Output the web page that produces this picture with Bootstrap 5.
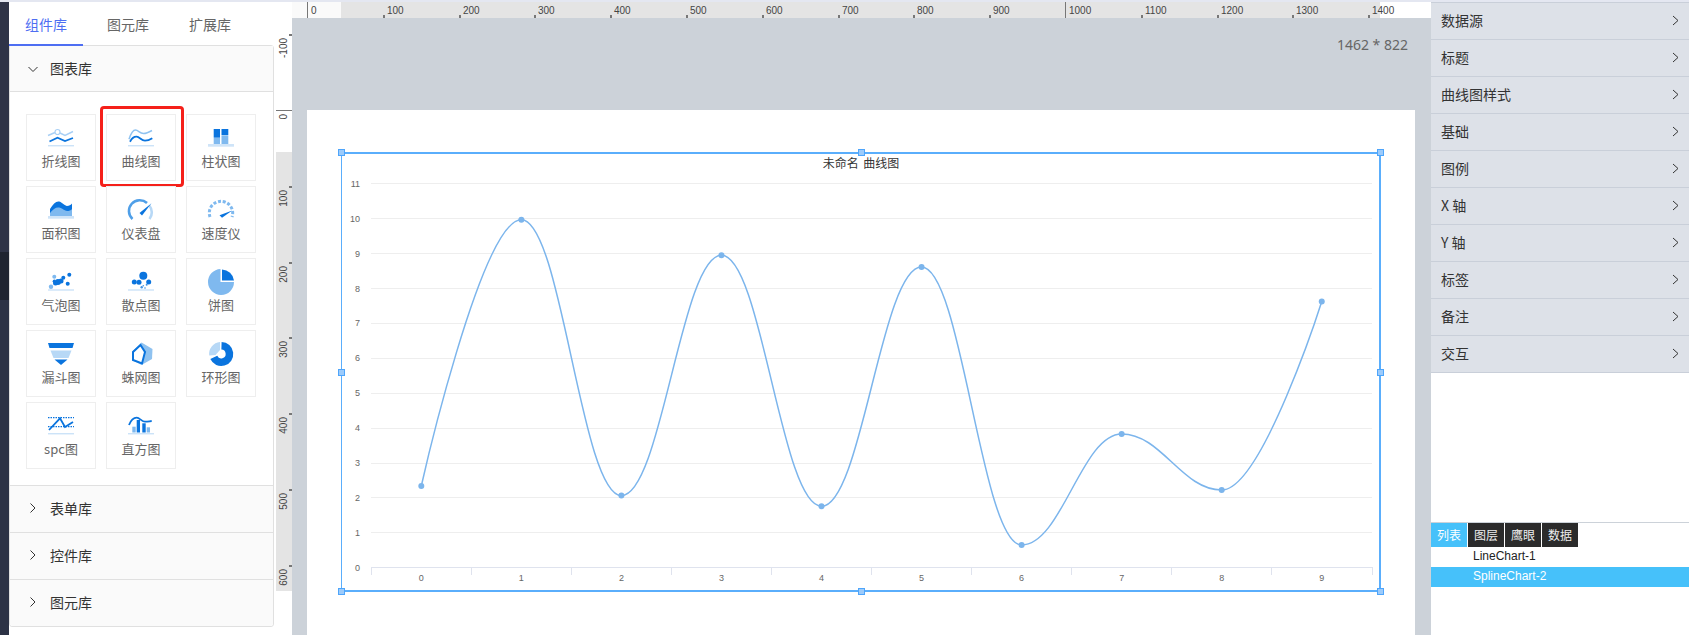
<!DOCTYPE html>
<html lang="zh">
<head>
    <meta charset="UTF-8">
    <meta name="viewport" content="width=device-width, initial-scale=1.0">
    <title>曲线图</title>
    <link href="https://cdn.jsdelivr.net/npm/bootstrap@5.3.0/dist/css/bootstrap.min.css" rel="stylesheet">
    <style>
        html, body { height: 100%; overflow: hidden; }
        body { font-family: "Liberation Sans", "Noto Sans CJK SC", sans-serif; background: #e4e7f1; padding-top: 2px; color: #333; }
        .cjk { font-family: "Noto Sans CJK SC", sans-serif; }
        .app-shell { height: 633px; }

        .side-strip { width: 9px; background: linear-gradient(#2f3447 0, #2f3447 250px, #1f2430 250px, #1f2430 298px, #2c3245 298px); }
        .side-panel { width: 267px; background: #fff; padding-right: 2px; }
        .lib-tabs { height: 44px; gap: 8px; }
        .lib-tab { width: 74px; height: 44px; line-height: 44px; text-align: center; font-size: 14px; color: #666; }
        .lib-tab.on { color: #4e6ef2; border-bottom: 2px solid #4e6ef2; position: relative; }
        .lib-card { border: 1px solid #e0e0e0; border-radius: 0 3px 3px 3px; margin-top: -1px; }
        .lib-head { height: 47px; background: #fafafa; font-size: 14px; color: #333; padding: 0 0 2px 17px; border-top: 1px solid #e0e0e0; }
        .lib-head:first-child { border-top: 0; border-bottom: 1px solid #e0e0e0; height: 46px; padding-bottom: 0; }
        .lib-head:last-child { border-radius: 0 0 3px 3px; }
        .lib-head svg { width: 12px; height: 12px; margin-right: 11px; }
        .lib-grid { display: grid; grid-template-columns: repeat(3, 70px); grid-auto-rows: 67px; column-gap: 10px; row-gap: 5px; padding: 22px 0 16px 16px; }
        .lib-cell { position: relative; border: 1px solid #eee; font-size: 13px; color: #666; padding-top: 12px; line-height: 20px; }
        .lib-cell svg { width: 26px; height: 22px; margin-bottom: 2px; overflow: visible; }
        .lib-pick { position: absolute; left: -7px; right: -9px; top: -9px; bottom: -7px; border: 3px solid #f5201a; border-radius: 4px; }

        .stage { width: 1155px; display: grid; grid-template-columns: 16px 1fr; grid-template-rows: 16px 1fr; }
        .ruler-corner { background: #fff; }
        .ruler-top, .ruler-left { display: block; background: #fff; }
        .ruler-text { font: 10px "Liberation Sans", sans-serif; fill: #444; }
        .canvas-area { background: #ccd2d9; padding: 0 16px 0 15px; overflow: hidden; }
        .canvas-size { height: 92px; padding: 17px 7px 0 0; font: 14px "Noto Sans", sans-serif; color: #666; text-align: right; }
        .art-board { background: #fff; height: 525px; padding: 42px 35px 0 34px; }
        .chart-box { position: relative; width: 1040px; height: 440px; border: 2px solid #5aaefc; border-left-width: 1px; }
        .chart-box svg { display: block; position: absolute; left: -1px; top: -2px; }
        .grab { position: absolute; width: 7px; height: 7px; background: #9ccbfb; border: 1px solid #4ea5fb; }
        .chart-title { font: 12px "Noto Sans CJK SC", sans-serif; fill: #333; word-spacing: 2px; }
        .chart-label { font: 9px "Liberation Sans", sans-serif; fill: #666; }

        .prop-panel { width: 258px; background: #fff; }
        .prop-list { border-top: 1px solid #c9cfd9; }
        .prop-row { height: 37px; background: #dde1e8; border-bottom: 1px solid #c9cfd9; font-size: 14px; padding: 0 10px 2px; }
        .prop-row svg { width: 7px; height: 11px; }
        .layer-panel { border-top: 1px solid #ccd2d9; margin-top: 149px; font-size: 12px; }
        .layer-tab { width: 36px; height: 24px; line-height: 24px; text-align: center; background: #2b2b2b; color: #eee; margin-right: 1px; }
        .layer-tab.on { background: #46c1fa; color: #fff; }
        .layer-list { font-family: "Liberation Sans", sans-serif; }
        .layer-row { height: 20px; line-height: 19px; padding-left: 42px; color: #222; }
        .layer-row.on { background: #46c1fa; color: #fff; }
    </style>
</head>
<body>
<div class="app-shell d-flex">
    <div class="side-strip"></div>

    <div class="side-panel cjk">
        <div class="lib-tabs d-flex">
            <div class="lib-tab on">组件库</div>
            <div class="lib-tab">图元库</div>
            <div class="lib-tab">扩展库</div>
        </div>
        <div class="lib-card">
            <div class="lib-head d-flex align-items-center">
                <svg viewBox="0 0 12 12"><path d="M1.500 4l4.500 4.500L10.500 4" fill="none" stroke="#333" stroke-width="1"/></svg>图表库
            </div>
            <div class="lib-grid">
                <div class="lib-cell d-flex flex-column align-items-center">
                    <svg viewBox="0 0 26 22"><path d="M0 8.500l7-3M12 6l5 2.500 8-4" fill="none" stroke="#a9d0f5" stroke-width="1.500"/><circle cx="9.500" cy="5" r="2.500" fill="none" stroke="#a9d0f5" stroke-width="1.200"/><path d="M1.500 14.500l8-3.800 7.500 3.300 8-3" fill="none" stroke="#0a74de" stroke-width="1.800"/><rect y="18.300" width="26" height="1" fill="#b7d8f6"/></svg>
                    折线图
                </div>
                <div class="lib-cell d-flex flex-column align-items-center">
                    <svg viewBox="0 0 26 22"><path d="M1 12.300C3 6 5 3 7.500 3c3 0 4 3.500 8 3.500 3 0 5-1 8.500-3" fill="none" stroke="#8fc2f0" stroke-width="1.500"/><path d="M2 14.700C4 11 6 9.500 8.700 9.700c3 .2 4.500 4 8.300 4 3 0 5-1 7.300-2.400" fill="none" stroke="#0a74de" stroke-width="1.800"/><rect y="18.300" width="26" height="1" fill="#b7d8f6"/></svg>
                    曲线图
                    <span class="lib-pick"></span>
                </div>
                <div class="lib-cell d-flex flex-column align-items-center">
                    <svg viewBox="0 0 26 22"><rect x="5.700" y="2" width="6.300" height="8.700" fill="#0a74de"/><rect x="5.700" y="11" width="6.300" height="6" fill="#7fb9ef"/><rect x="13.500" y="2" width="6.800" height="6" fill="#0a74de"/><rect x="13.500" y="8.300" width="6.800" height="8.700" fill="#7fb9ef"/><rect y="17" width="26" height="2.700" fill="#cfe4f8"/></svg>
                    柱状图
                </div>
                <div class="lib-cell d-flex flex-column align-items-center">
                    <svg viewBox="0 0 26 22"><path d="M2 10C5 5 8 2 11 2.500S17 7 19 7s4-1 5-2.500V17H2z" fill="#0a74de"/><path d="M2 14c3-4 6-6 9-5.500s6 3.500 8 3.500 4-.5 5-2V17H2z" fill="#7fb9ef"/><rect y="17" width="26" height="2.700" fill="#cfe4f8"/></svg>
                    面积图
                </div>
                <div class="lib-cell d-flex flex-column align-items-center">
                    <svg viewBox="0 0 26 22"><path d="M4.500 20A10.700 10.700 0 0 1 19 4" fill="none" stroke="#4f9fe8" stroke-width="2.600"/><path d="M21.300 6.500A10.700 10.700 0 0 1 21.500 20" fill="none" stroke="#b7d8f6" stroke-width="2.600"/><path d="M23.500 4.300L14 16.500l-2.500-2.500z" fill="#0a74de"/></svg>
                    仪表盘
                </div>
                <div class="lib-cell d-flex flex-column align-items-center">
                    <svg viewBox="0 0 26 22"><path d="M2 18A11.700 11.700 0 1 1 24 18" fill="none" stroke="#7fb9ef" stroke-width="3" stroke-dasharray="3 1.800"/><path d="M24.300 11.500L14 18.700l-2.500-2.500z" fill="#0a74de"/></svg>
                    速度仪
                </div>
                <div class="lib-cell d-flex flex-column align-items-center">
                    <svg viewBox="0 0 26 22"><g fill="#0a74de"><circle cx="10" cy="11" r="3"/><circle cx="7.500" cy="12" r="2.500"/><circle cx="13" cy="10" r="2.500"/><circle cx="15.300" cy="6.700" r="2"/><circle cx="21.300" cy="3.700" r="2"/><circle cx="19.700" cy="12.700" r="2"/><circle cx="6.300" cy="10.200" r="1.600"/></g><g fill="#7fb9ef"><circle cx="6.300" cy="5.700" r="2"/><circle cx="3" cy="15.700" r="2.200"/></g><rect y="18.500" width="26" height="1" fill="#b7d8f6"/></svg>
                    气泡图
                </div>
                <div class="lib-cell d-flex flex-column align-items-center">
                    <svg viewBox="0 0 26 22"><g fill="#0a74de"><circle cx="15.300" cy="4.700" r="4"/><circle cx="6.300" cy="11" r="2.500"/><circle cx="11" cy="11.300" r="2.500"/><circle cx="20.700" cy="11" r="2.500"/></g><g fill="#3f92e4"><circle cx="18.700" cy="13.800" r="1"/><circle cx="13.700" cy="16.300" r="1.200"/><circle cx="17" cy="17" r=".8"/><circle cx="15.300" cy="14.700" r=".8"/></g><rect y="18.500" width="26" height="1" fill="#b7d8f6"/></svg>
                    散点图
                </div>
                <div class="lib-cell d-flex flex-column align-items-center">
                    <svg viewBox="0 0 26 22"><path d="M12.500 -2A13 13 0 1 0 26 11H12.500z" fill="#7fb9ef"/><path d="M14 -1.500V9.500H26A12.500 12.500 0 0 0 14 -1.500z" fill="#0a74de"/></svg>
                    饼图
                </div>
                <div class="lib-cell d-flex flex-column align-items-center">
                    <svg viewBox="0 0 26 22"><path d="M0 0h26l-1.500 5h-23z" fill="#0a74de"/><path d="M2.500 7.500h21L20.500 15h-15z" fill="#b7d8f6"/><path d="M6.500 16.500h13L13 22z" fill="#0a74de"/></svg>
                    漏斗图
                </div>
                <div class="lib-cell d-flex flex-column align-items-center">
                    <svg viewBox="0 0 26 22"><path d="M13.500 -.5L24.500 6 24 16 13.500 22 6 18 5 8z" fill="#8fc2f0"/><path d="M12.500 2L5 9v8l9 3.500L17 9z" fill="#fff" stroke="#0a74de" stroke-width="2"/></svg>
                    蛛网图
                </div>
                <div class="lib-cell d-flex flex-column align-items-center">
                    <svg viewBox="0 0 26 22"><path d="M13.500 2.800A8.200 8.200 0 1 1 5.800 14.400" fill="none" stroke="#0a74de" stroke-width="7.600"/><path d="M12 -1A12 12 0 0 0 1.200 12.500L7.500 12 12 7z" fill="#b7d8f6"/></svg>
                    环形图
                </div>
                <div class="lib-cell d-flex flex-column align-items-center">
                    <svg viewBox="0 0 26 22"><path d="M0 2.700h26M0 11.700h26" stroke="#0a74de" stroke-width="1.200" stroke-dasharray="1.500 1"/><path d="M1 15L12 3.300 17 12l8-5" fill="none" stroke="#0a74de" stroke-width="1.800"/><rect y="18.300" width="26" height="1" fill="#b7d8f6"/></svg>
                    spc图
                </div>
                <div class="lib-cell d-flex flex-column align-items-center">
                    <svg viewBox="0 0 26 22"><rect x="4.300" y="11.700" width="3.400" height="5.800" fill="#7fb9ef"/><rect x="8.700" y="5" width="3.300" height="12.500" fill="#0a74de"/><rect x="14.300" y="8.300" width="3.400" height="9.200" fill="#0a74de"/><rect x="18.700" y="12.300" width="3.300" height="5.200" fill="#7fb9ef"/><path d="M1 10C3 5 6 2.700 8.700 2.700c3 0 5 4 8.300 4 3 0 4.500-.5 6.700-.7" fill="none" stroke="#0a74de" stroke-width="1.800"/><rect y="18.300" width="26" height="1" fill="#b7d8f6"/></svg>
                    直方图
                </div>
            </div>
            <div class="lib-head d-flex align-items-center"><svg viewBox="0 0 12 12"><path d="M3.500 1.500L8 6l-4.500 4.500" fill="none" stroke="#333" stroke-width="1"/></svg>表单库</div>
            <div class="lib-head d-flex align-items-center"><svg viewBox="0 0 12 12"><path d="M3.500 1.500L8 6l-4.500 4.500" fill="none" stroke="#333" stroke-width="1"/></svg>控件库</div>
            <div class="lib-head d-flex align-items-center"><svg viewBox="0 0 12 12"><path d="M3.500 1.500L8 6l-4.500 4.500" fill="none" stroke="#333" stroke-width="1"/></svg>图元库</div>
        </div>
    </div>

    <div class="stage">
        <div class="ruler-corner"></div>
        <svg class="ruler-top" id="rulerTop" width="1139" height="16"></svg>
        <svg class="ruler-left" id="rulerLeft" width="16" height="617"></svg>
        <div class="canvas-area">
            <div class="canvas-size">1462 * 822</div>
            <div class="art-board">
                <div class="chart-box" id="chartBox">
                    <svg id="chart" width="1040" height="440" viewBox="341 152 1040 440"></svg>
                </div>
            </div>
        </div>
    </div>

    <div class="prop-panel cjk">
        <div class="prop-list" id="propList"></div>
        <div class="layer-panel">
            <div class="d-flex">
                <div class="layer-tab on">列表</div>
                <div class="layer-tab">图层</div>
                <div class="layer-tab">鹰眼</div>
                <div class="layer-tab">数据</div>
            </div>
            <div class="layer-list">
                <div class="layer-row">LineChart-1</div>
                <div class="layer-row on">SplineChart-2</div>
            </div>
        </div>
    </div>
</div>

<script src="https://cdn.jsdelivr.net/npm/bootstrap@5.3.0/dist/js/bootstrap.bundle.min.js"></script>
<script>
// right hand property rows
const props = ['数据源', '标题', '曲线图样式', '基础', '图例', 'X 轴', 'Y 轴', '标签', '备注', '交互'];
document.getElementById('propList').innerHTML = props.map(p => `
    <div class="prop-row d-flex align-items-center justify-content-between">
        <span>${p}</span>
        <svg viewBox="0 0 7 11"><path d="M1 1l5 4.500-5 4.500" fill="none" stroke="#333" stroke-width="1"/></svg>
    </div>`).join('');

// rulers, 100 units are 75.8px on screen
const step = 75.8;
let topRuler = '<rect width="49" height="16" fill="#fafafa"/><rect x="49" width="1039" height="16" fill="#e4e4e4"/>';
for (let i = 0; i <= 14; i++) {
    const x = Math.round(15 + step * i);
    const big = i % 10 === 0;
    topRuler += `<rect x="${x}" y="${big ? 0 : 13}" width="${big ? 1 : 2}" height="${big ? 16 : 3}" fill="#777"/>`;
    topRuler += `<text class="ruler-text" x="${x + 4}" y="12">${i * 100}</text>`;
}
document.getElementById('rulerTop').innerHTML = topRuler;

let leftRuler = '<rect y="134" width="16" height="439" fill="#e4e4e4"/>';
for (let i = -1; i <= 6; i++) {
    const y = Math.round(92 + step * i);
    const big = i === 0;
    leftRuler += `<rect x="${big ? 0 : 13}" y="${y}" width="${big ? 16 : 3}" height="${big ? 1 : 2}" fill="#777"/>`;
    leftRuler += `<text class="ruler-text" text-anchor="end" transform="translate(11 ${y + 4}) rotate(-90)">${i * 100}</text>`;
}
document.getElementById('rulerLeft').innerHTML = leftRuler;

// spline chart, page coordinates in the viewBox
const pts = [486, 219.7, 495.5, 255.3, 506.3, 267.1, 545, 434, 490, 301.6].map((y, i) => [421.3 + 100.05 * i, y]);
const yOf = v => 567.3 - 34.91 * v;
let svg = '';
for (let v = 0; v <= 11; v++) {
    if (v > 0) svg += `<rect x="371" y="${Math.round(yOf(v))}" width="1001" height="1" fill="#eee"/>`;
    svg += `<text class="chart-label" text-anchor="end" x="360" y="${yOf(v) + 3.5}">${v}</text>`;
}
svg += '<rect x="371" y="567" width="1001" height="1" fill="#dfe3ee"/>';
for (let i = 0; i <= 10; i++) svg += `<rect x="${Math.round(371 + 100.05 * i)}" y="567" width="1" height="8" fill="#dfe3ee"/>`;
pts.forEach((p, i) => { svg += `<text class="chart-label" text-anchor="middle" x="${p[0]}" y="581">${i}</text>`; });
svg += '<text class="chart-title" text-anchor="middle" x="861" y="168">未命名 曲线图</text>';

// control points like a highcharts spline
function conts(i) {
    const [x, y] = pts[i], prev = pts[i - 1], next = pts[i + 1];
    if (!prev || !next) return [[x, y], [x, y]];
    let lx = (1.5 * x + prev[0]) / 2.5, ly = (1.5 * y + prev[1]) / 2.5;
    let rx = (1.5 * x + next[0]) / 2.5, ry = (1.5 * y + next[1]) / 2.5;
    const c = ((ry - ly) * (rx - x)) / (rx - lx) + y - ry;
    ly += c; ry += c;
    if ((ly > prev[1] && ly > y) || (ly < prev[1] && ly < y)) { ly = (ly > y) ? Math.max(prev[1], y) : Math.min(prev[1], y); ry = 2 * y - ly; }
    if ((ry > next[1] && ry > y) || (ry < next[1] && ry < y)) { ry = (ry > y) ? Math.max(next[1], y) : Math.min(next[1], y); ly = 2 * y - ry; }
    return [[lx, ly], [rx, ry]];
}
let d = `M${pts[0][0]} ${pts[0][1]}`;
for (let i = 1; i < pts.length; i++) {
    const a = conts(i - 1)[1], b = conts(i)[0];
    d += ` C${a[0]} ${a[1]} ${b[0]} ${b[1]} ${pts[i][0]} ${pts[i][1]}`;
}
svg += `<path d="${d}" fill="none" stroke="#7cb5ec" stroke-width="1.500"/>`;
pts.forEach(p => { svg += `<circle cx="${p[0]}" cy="${p[1]}" r="3" fill="#7cb5ec"/>`; });
document.getElementById('chart').innerHTML = svg;

// selection handles around the chart
const box = document.getElementById('chartBox');
[[0, 0], [50, 0], [100, 0], [0, 50], [100, 50], [0, 100], [50, 100], [100, 100]].forEach(([px, py]) => {
    const h = document.createElement('span');
    h.className = 'grab';
    h.style.left = `calc(${px}% + ${px / 50 - 4}px)`;
    h.style.top = `calc(${py}% + ${py * 0.03 - 5}px)`;
    box.appendChild(h);
});
</script>
</body>
</html>
